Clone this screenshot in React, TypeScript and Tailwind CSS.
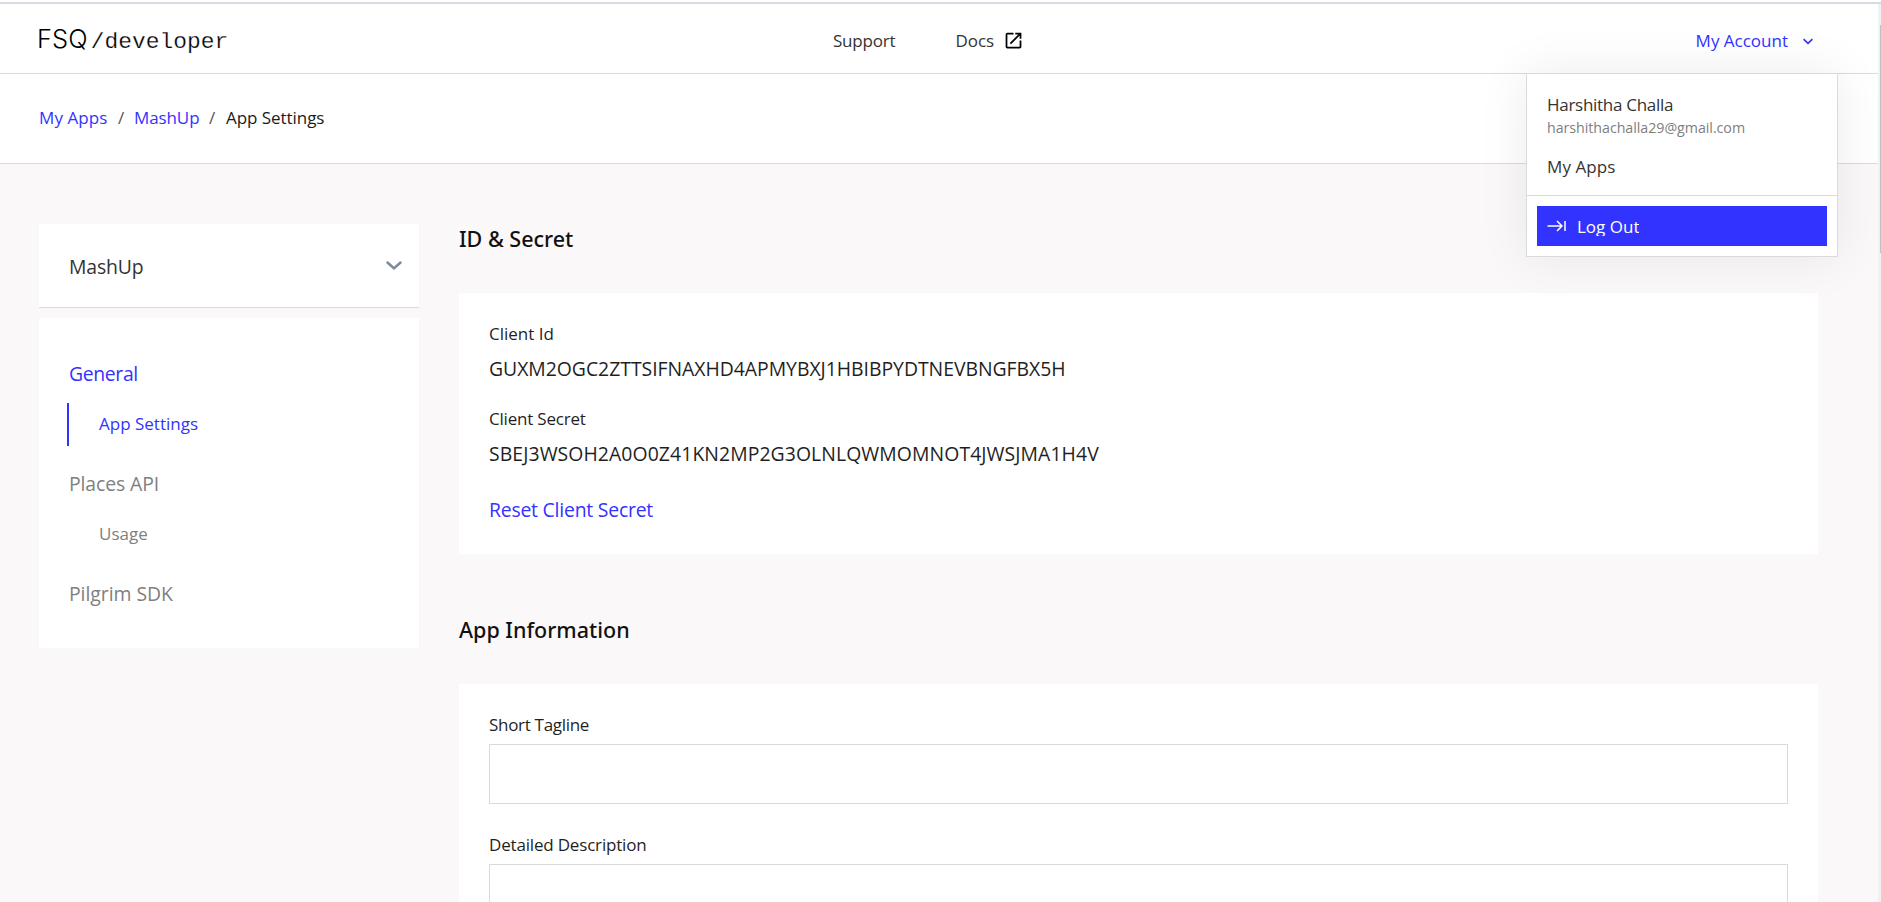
import React from "react";

const BODY = "text-[17px] leading-[24px]";
const LARGE = "text-[19.4px] leading-[24px]";
const HEADING = "font-['Noto_Sans',sans-serif] text-[21.5px] font-medium leading-[30px]";

function Header() {
  return (
    <header className="relative z-10 flex h-[70px] shrink-0 items-start border-b border-[#d9dadc]">
      <a className="flex w-[833px] items-baseline pl-[37px] pt-[20px] text-black">
        <span className="font-[Inter,sans-serif] text-[25.5px] font-[350] leading-[30px] tracking-[0.1px]">FSQ</span>
        <span className="ml-[3px] font-['Liberation_Mono',monospace] text-[22.9px] leading-[30px] [-webkit-text-stroke:0.25px_white]">/developer</span>
      </a>
      <nav className={`flex flex-1 pt-[25px] text-[#333] ${BODY}`}>
        <a className="tracking-[-0.2px]">Support</a>
        <a className="ml-[60px] flex">
          Docs
          <svg className="ml-[9px] mt-[1px] size-[21px] text-black" viewBox="0 0 24 24" fill="currentColor">
            <path d="M19 19H5V5h7V3H5a2 2 0 0 0-2 2v14a2 2 0 0 0 2 2h14c1.100 0 2-.9 2-2v-7h-2v7zM14 3v2h3.590l-9.830 9.830 1.410 1.410L19 6.410V10h2V3h-7z" />
          </svg>
        </a>
      </nav>
      <button className={`mr-[65px] flex pt-[25px] text-[#33f] ${BODY}`}>
        <span>My Account</span>
        <svg className="ml-[15px] mt-[9px] h-[8px] w-[10px]" viewBox="0 0 10 8" fill="none" stroke="currentColor" strokeWidth="1.700">
          <path d="M0.600 1.200 5 5.400 9.400 1.200" />
        </svg>
      </button>
      <AccountMenu />
    </header>
  );
}

function AccountMenu() {
  return (
    <div className={`absolute left-[1526px] top-[69px] w-[312px] border border-[#d9dadc] bg-white text-[#333] shadow-[0_0_48px_rgba(0,0,0,0.08)] ${BODY}`}>
      <div className="flex h-[122px] flex-col border-b border-[#d9dadc] pl-[20px] pt-[19px]">
        <span className="tracking-[-0.28px]">Harshitha Challa</span>
        <span className="text-[14.25px] leading-[22px] tracking-[-0.05px] text-[#808080]">harshithachalla29@gmail.com</span>
        <a className="mt-[16px] tracking-[0.1px]">My Apps</a>
      </div>
      <div className="p-[10px]">
        <button className="flex h-[40px] w-full items-start bg-[#33f] pl-[10px] text-white">
          <svg className="mt-[14px] h-[12px] w-[20px]" viewBox="0 0 20 12" fill="none" stroke="currentColor" strokeWidth="1.500">
            <path d="M0.500 6h14M10 1l5 5-5 5M18 1v10" />
          </svg>
          <span className="ml-[10px] mt-[9px] h-[21px] overflow-hidden">
            <span className="block">Log Out</span>
          </span>
        </button>
      </div>
    </div>
  );
}

function Breadcrumb() {
  return (
    <div className={`flex h-[90px] shrink-0 border-b border-[#d9dadc] pl-[38px] pt-[32px] text-[#33f] ${BODY}`}>
      <a className="w-[80px] pl-[1px] tracking-[0.1px]">My Apps</a>
      <span className="w-[16px] text-[#555]">/</span>
      <a className="w-[75px] tracking-[-0.1px]">MashUp</a>
      <span className="w-[17px] text-[#555]">/</span>
      <span className="tracking-[-0.05px] text-[#1a1a1a]">App Settings</span>
    </div>
  );
}

function Sidebar() {
  return (
    <aside className="w-[380px]">
      <div className="flex h-[84px] items-start border-b border-[#d9dadc] bg-white pl-[30px] pt-[31px]">
        <span className={`tracking-[-0.15px] text-[#333] ${LARGE}`}>MashUp</span>
        <svg className="ml-auto mr-[17px] mt-[6px] h-[10px] w-[16px]" viewBox="0 0 16 10" fill="none" stroke="#7d889e" strokeWidth="2.500" strokeLinecap="round">
          <path d="M1.500 1.500 8 7.400 14.500 1.500" />
        </svg>
      </div>
      <nav className="mt-[10px] flex h-[330px] flex-col bg-white pl-[28px] pt-[44px] text-[#808080]">
        <a className={`pb-px pl-[2px] tracking-[-0.35px] text-[#33f] ${LARGE}`}>General</a>
        <a className={`mt-[16px] h-[43px] border-l-2 border-[#33f] pl-[30px] pt-[9px] text-[#33f] ${BODY}`}>App Settings</a>
        <a className={`mt-[26px] pb-px pl-[2px] tracking-[-0.1px] ${LARGE}`}>Places API</a>
        <a className={`mt-[16px] h-[43px] pl-[32px] pt-[9px] ${BODY}`}>Usage</a>
        <a className={`mt-[26px] pl-[2px] tracking-[-0.05px] ${LARGE}`}>Pilgrim SDK</a>
      </nav>
    </aside>
  );
}

function Main() {
  return (
    <main className="ml-[40px] w-[1359px] text-[#1f1f1f]">
      <h2 className={`h-[69px] text-[#111] ${HEADING}`}>ID &amp; Secret</h2>
      <section className="flex h-[261px] flex-col bg-white pl-[30px] pt-[29px]">
        <span className={BODY}>Client Id</span>
        <span className={`mt-[11px] tracking-[-0.03px] ${LARGE}`}>GUXM2OGC2ZTTSIFNAXHD4APMYBXJ1HBIBPYDTNEVBNGFBX5H</span>
        <span className={`mt-[26px] tracking-[-0.2px] ${BODY}`}>Client Secret</span>
        <span className={`mt-[11px] tracking-[0.08px] ${LARGE}`}>SBEJ3WSOH2A0O0Z41KN2MP2G3OLNLQWMOMNOT4JWSJMA1H4V</span>
        <a className={`mt-[32px] tracking-[-0.22px] text-[#33f] ${LARGE}`}>Reset Client Secret</a>
      </section>
      <h2 className={`h-[130px] pt-[61px] text-[#111] ${HEADING}`}>App Information</h2>
      <section className={`flex h-[400px] flex-col bg-white px-[30px] pt-[29px] ${BODY}`}>
        <label className="tracking-[-0.3px]">Short Tagline</label>
        <input className="mt-[7px] h-[60px] border border-[#d9dadc] px-4 outline-none" />
        <label className="mt-[29px] tracking-[-0.18px]">Detailed Description</label>
        <textarea className="mt-[7px] h-[160px] resize-none border border-[#d9dadc] p-4 outline-none" />
      </section>
    </main>
  );
}

export default function App() {
  return (
    <div className="flex h-[902px] flex-col overflow-hidden bg-white font-['Open_Sans',sans-serif]">
      <div className="mt-[2px] h-[2px] shrink-0 bg-[#dadae3]" />
      <div className="flex min-h-0 flex-1">
        <div className="flex min-w-0 flex-1 flex-col overflow-hidden">
          <Header />
          <Breadcrumb />
          <div className="flex flex-1 bg-[#faf8f9] pl-[39px] pt-[60px]">
            <Sidebar />
            <Main />
          </div>
        </div>
        <div className="flex w-[3px] justify-end bg-[#f1f1f1] pt-[21px]">
          <div className="h-[228px] w-px bg-[#c1c1c1]" />
        </div>
      </div>
    </div>
  );
}
